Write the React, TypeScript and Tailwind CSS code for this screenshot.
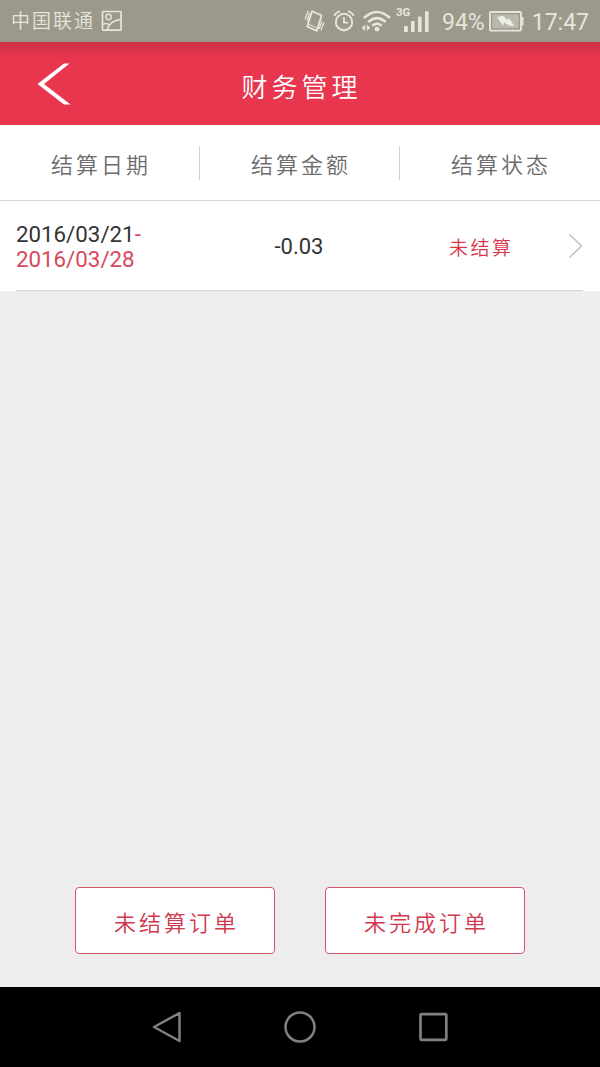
type Settlement = {
  start: string;
  end: string;
  amount: string;
  status: string;
};

const columns = ["结算日期", "结算金额", "结算状态"];

const settlements: Settlement[] = [
  { start: "2016/03/21", end: "2016/03/28", amount: "-0.03", status: "未结算" },
];

function PictureIcon() {
  return (
    <svg width="22" height="22" viewBox="0 0 22 22" fill="none" stroke="currentColor" strokeWidth="1.7">
      <rect x="1.5" y="1.5" width="18.6" height="18.6" rx="0.8" />
      <circle cx="7.6" cy="7" r="2.7" strokeWidth="1.4" />
      <path d="M6 20C8 13.5 12.5 10 20 9.5" />
      <path d="M2 14.3C4 13.2 6.5 13.4 8.7 15" strokeWidth="1.4" />
    </svg>
  );
}

function VibrateIcon() {
  return (
    <svg width="21" height="22" viewBox="0 0 21 22" fill="none" stroke="currentColor" strokeWidth="1.9" strokeLinejoin="round">
      <path d="M8 1.2L17.6 5.5L12.8 20.8L3.2 16.5Z" />
      <path d="M4.5 14.3L12.8 17.8" strokeWidth="1" />
      <path d="M1 9L4.2 0.8M2.9 10.8L5.8 3M16.8 20.5L20 12.5M15 19L18 11.5" strokeWidth="1.3" />
    </svg>
  );
}

function AlarmIcon() {
  return (
    <svg width="22" height="22" viewBox="0 0 22 22" fill="none" stroke="currentColor" strokeWidth="2">
      <circle cx="11" cy="12" r="8.2" />
      <path d="M11 7V12.6H15.2" strokeWidth="1.8" />
      <path d="M1.3 5.8Q3 2.2 7 1.1M20.7 5.8Q19 2.2 15 1.1" strokeWidth="1.8" />
    </svg>
  );
}

function WifiIcon() {
  return (
    <svg width="30" height="22" viewBox="0 0 30 22" fill="none" stroke="currentColor" strokeWidth="2.5">
      <path d="M3 8Q16 -4 29 8" />
      <path d="M7.2 12Q16 4.2 24.8 12" />
      <path d="M11.2 15.8Q16 11.5 20.8 15.8" />
      <circle cx="16" cy="19.2" r="2.4" fill="currentColor" stroke="none" />
      <path d="M4.2 14.5V21L0.6 17.8ZM5.8 14.5V21L9.4 17.8Z" fill="currentColor" stroke="none" />
    </svg>
  );
}

function SignalIcon() {
  return (
    <svg width="25" height="21" viewBox="0 0 25 21" fill="currentColor">
      <rect x="0" y="15" width="3.8" height="6" rx="0.5" />
      <rect x="7" y="10" width="3.6" height="11" rx="0.5" />
      <rect x="14" y="5.5" width="3.6" height="15.5" rx="0.5" />
      <rect x="21" y="0.2" width="3.6" height="20.8" rx="0.5" />
    </svg>
  );
}

function BatteryIcon() {
  return (
    <svg width="35" height="21" viewBox="0 0 35 21" fill="none">
      <rect x="1" y="1" width="31" height="18.6" rx="1" stroke="currentColor" strokeWidth="1.9" />
      <rect x="3.3" y="3.3" width="26.4" height="14" fill="#b9b8ac" />
      <path d="M32.5 6H34.5V14.5H32.5Z" fill="currentColor" />
      <path d="M8 6L14 4.8L18.2 9L20 7L25.5 15.2L19.5 14.2L15.2 11.2L14 14.8Z" fill="#eeede7" />
    </svg>
  );
}

function StatusBar() {
  return (
    <div className="flex h-[42px] items-center justify-between bg-[#9b998a] pl-[11px] pr-[11px] text-[#e6e5dd]">
      <div className="flex items-center">
        <span className="pt-[3px] text-[19px] font-[350] tracking-[2px]">中国联通</span>
        <span className="ml-[6px]">
          <PictureIcon />
        </span>
      </div>
      <div className="flex items-center">
        <VibrateIcon />
        <span className="ml-[8px]">
          <AlarmIcon />
        </span>
        <span className="ml-[6px]">
          <WifiIcon />
        </span>
        <div className="relative ml-[13px]">
          <span className="absolute -left-2 -top-[4px] text-[11.5px] font-bold leading-none">3G</span>
          <SignalIcon />
        </div>
        <span className="ml-[13px] pt-[2px] text-[23px] leading-none">94%</span>
        <span className="ml-[4px]">
          <BatteryIcon />
        </span>
        <span className="ml-[8px] pt-[2px] text-[23px] leading-none">17:47</span>
      </div>
    </div>
  );
}

function Header() {
  return (
    <header className="grid h-[83px] grid-cols-[1fr_auto_1fr] items-center bg-linear-to-b from-[#cf3046] via-[#e8364e] via-20% to-[#e8364e] text-white">
      <button className="pl-9" aria-label="返回">
        <svg width="36" height="44" viewBox="0 0 36 44" fill="currentColor">
          <path d="M28 1.5H33.5L8 22L34.5 42.5H28L1.5 22Z" />
        </svg>
      </button>
      <h1 className="pl-[3px] pt-[9px] text-[26px] font-[350] tracking-[4px]">财务管理</h1>
    </header>
  );
}

function TableHead() {
  return (
    <div className="flex h-[76px] items-center border-b border-[#d6d6d6] bg-white pr-px">
      {columns.map((label) => (
        <div
          key={label}
          className="flex h-[34px] flex-1 items-center justify-center border-r border-[#d0d0d0] pl-[3px] pt-[6px] text-[22px] font-[350] tracking-[3px] text-[#6c6c6c] last:border-r-0"
        >
          {label}
        </div>
      ))}
    </div>
  );
}

function SettlementRow({ item }: { item: Settlement }) {
  return (
    <div className="bg-white pl-4 pr-[17px]">
      <div className="flex h-[90px] items-center border-b border-[#d6d6d6]">
        <div className="w-[183px] pt-[2px] text-[22.3px] leading-[25px] text-[#333333]">
          {item.start}
          <span className="text-[#d8485c]">-</span>
          <div className="text-[#d8485c]">{item.end}</div>
        </div>
        <div className="w-[200px] pt-[2px] text-center text-[22px] text-[#333333]">{item.amount}</div>
        <div className="flex flex-1 items-center justify-between pl-[50px]">
          <span className="pt-[7px] text-[19px] font-[350] tracking-[2.5px] text-[#d8384e]">{item.status}</span>
          <svg width="15" height="26" viewBox="0 0 15 26" fill="none" stroke="#c4c4c4" strokeWidth="1.7">
            <path d="M1.5 1.5L13.5 13L1.5 24.5" />
          </svg>
        </div>
      </div>
    </div>
  );
}

function OrderButton({ label }: { label: string }) {
  return (
    <button className="h-[67px] w-[200px] rounded-[4px] border border-[#d0566a] bg-white pl-[3px] pt-[6px] text-[22px] font-[350] tracking-[3px] text-[#d0384e]">
      {label}
    </button>
  );
}

function NavBar() {
  return (
    <nav className="flex h-20 items-center justify-center gap-[101px] bg-black text-[#808080]">
      <svg width="32" height="32" viewBox="0 0 32 32" fill="none" stroke="currentColor" strokeWidth="2.5" strokeLinejoin="round">
        <path d="M28.5 2V30L3 16Z" />
      </svg>
      <svg width="32" height="32" viewBox="0 0 32 32" fill="none" stroke="currentColor" strokeWidth="2.5">
        <circle cx="16" cy="16" r="14.5" />
      </svg>
      <svg width="32" height="32" viewBox="0 0 32 32" fill="none" stroke="currentColor" strokeWidth="2.7">
        <rect x="3.5" y="3.2" width="25.8" height="25.6" rx="1" />
      </svg>
    </nav>
  );
}

export default function App() {
  return (
    <main className="flex h-[1067px] w-[600px] flex-col overflow-hidden bg-[#ededed] font-[Roboto,'Noto_Sans_CJK_SC',sans-serif]">
      <StatusBar />
      <Header />
      <TableHead />
      {settlements.map((item) => (
        <SettlementRow key={item.start} item={item} />
      ))}
      <div className="mt-auto flex justify-center gap-[50px] pb-[33px]">
        <OrderButton label="未结算订单" />
        <OrderButton label="未完成订单" />
      </div>
      <NavBar />
    </main>
  );
}
